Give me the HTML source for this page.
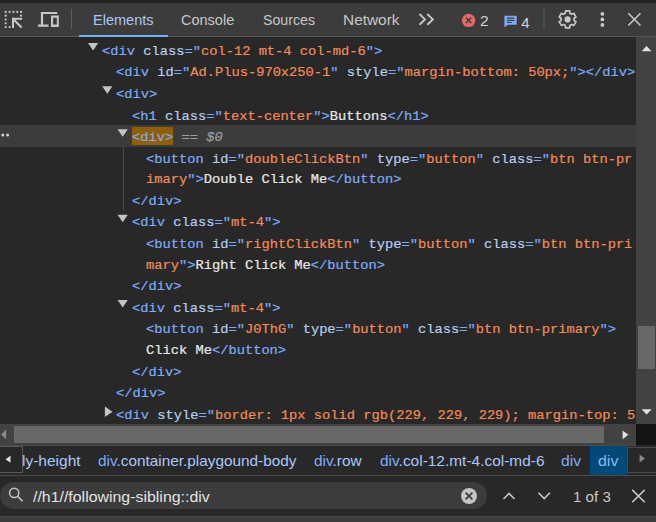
<!DOCTYPE html>
<html><head><meta charset="utf-8">
<style>
*{margin:0;padding:0;box-sizing:border-box}
html,body{width:656px;height:522px;overflow:hidden;background:#282828;position:relative}
body{font-family:"Liberation Sans",sans-serif;color:#e3e3e3}
.a{position:absolute}
#topstrip{left:0;top:0;width:656px;height:3px;background:#1f2326}
#toolbar{left:0;top:3px;width:656px;height:33px;background:#3c3c3c}
#tbline{left:0;top:36px;width:656px;height:1px;background:#575757}
.sep{width:1px;background:#5e5e5e}
.tab{font-size:14.5px;color:#c7c7c7;white-space:pre;line-height:1}
#code{left:0;top:37px;width:636px;height:387px;overflow:hidden}
.ln{position:absolute;-webkit-text-stroke:0.2px currentColor;transform:scaleX(1.0563);transform-origin:0 0;font-family:"Liberation Mono",monospace;font-size:13px;white-space:pre;line-height:1;color:#e8e8e8}
.t{color:#7cacf8}
.n{color:#b5cdee}
.v{color:#f28b54}
.e{color:#7cacf8}
.dim{color:#9aa0a6;font-style:italic}
.ui{position:absolute;white-space:pre;line-height:1;transform-origin:0 0;font-family:"Liberation Sans",sans-serif}
.bd{color:#7cacf8}
.bt{color:#a8c7fa}
.bs{color:#8fb8f4}
.tri{position:absolute;width:0;height:0}
.td{border-left:4.8px solid transparent;border-right:4.8px solid transparent;border-top:7px solid #c4c4c4}
.tr{border-top:4.5px solid transparent;border-bottom:4.5px solid transparent;border-left:7px solid #c4c4c4}
</style></head><body>
<div id="topstrip" class="a"></div>
<div id="toolbar" class="a"></div>
<div id="tbline" class="a"></div>

<!-- toolbar icons -->
<svg class="a" style="left:0;top:0" width="656" height="37" viewBox="0 0 656 37">
  <g fill="#c7c7c7"><circle cx="5.7" cy="11.9" r="1.1"/><circle cx="9.6" cy="11.9" r="1.1"/><circle cx="13.5" cy="11.9" r="1.1"/><circle cx="17.3" cy="11.9" r="1.1"/><circle cx="21.1" cy="11.9" r="1.1"/><circle cx="5.7" cy="15.7" r="1.1"/><circle cx="5.7" cy="19.5" r="1.1"/><circle cx="5.7" cy="23.3" r="1.1"/><circle cx="5.7" cy="27.1" r="1.1"/><circle cx="9.6" cy="27.1" r="1.1"/><circle cx="21.1" cy="15.7" r="1.1"/>
    <rect x="12" y="17.8" width="10.2" height="2"/>
    <rect x="12" y="17.8" width="2" height="10.2"/>
  </g>
  <path d="M13.6 19.4 L21.6 27.4" stroke="#c7c7c7" stroke-width="2.1"/>
  <g fill="#c7c7c7">
    <rect x="40.9" y="12" width="2.2" height="13.5"/>
    <rect x="40.9" y="12" width="16.3" height="2"/>
    <rect x="38.1" y="24.5" width="10.4" height="2.3"/>
    <path d="M51 15.6 h7.8 v11.3 h-7.8 z M53.1 17.7 v6.9 h3.7 v-6.9 z" fill-rule="evenodd"/>
  </g>
  <rect x="71" y="9" width="1" height="20" fill="#5e5e5e"/>
  <rect x="79" y="35" width="89" height="2" fill="#7cacf8"/>
  <g stroke="#c7c7c7" stroke-width="1.9" fill="none">
    <path d="M419.5 14 L425 19.4 L419.5 24.8"/>
    <path d="M427.3 14 L432.8 19.4 L427.3 24.8"/>
  </g>
  <circle cx="468.6" cy="20.4" r="6.7" fill="#e46962"/>
  <path d="M466 17.8 L471.2 23 M471.2 17.8 L466 23" stroke="#3c3c3c" stroke-width="1.4"/>
  <path d="M505 15.8 h11.7 a0.8 0.8 0 0 1 0 0 v8.9 h-9 l-3.3 2.8 v-11.7 z" fill="#7cacf8"/>
  <g stroke="#3c3c3c" stroke-width="1.2"><path d="M507 18.2 h7.3 M507 20.4 h7.3 M507 22.5 h4.8"/></g>
  <rect x="543.5" y="9.5" width="1" height="19" fill="#5e5e5e"/>
  <path d="M565.34 13.20 L565.50 10.96 L569.70 10.96 L569.86 13.20 L571.84 14.34 L573.86 13.36 L575.96 17.00 L574.10 18.25 L574.10 20.55 L575.96 21.80 L573.86 25.44 L571.84 24.46 L569.86 25.60 L569.70 27.84 L565.50 27.84 L565.34 25.60 L563.36 24.46 L561.34 25.44 L559.24 21.80 L561.10 20.55 L561.10 18.25 L559.24 17.00 L561.34 13.36 L563.36 14.34 Z" stroke="#c7c7c7" stroke-width="1.7" fill="none" stroke-linejoin="round"/>
  <circle cx="567.6" cy="19.4" r="3.1" fill="#c7c7c7"/>
  <g fill="#c7c7c7"><circle cx="602.4" cy="13.9" r="1.9"/><circle cx="602.4" cy="19.4" r="1.9"/><circle cx="602.4" cy="25" r="1.9"/></g>
  <path d="M628.3 13.3 L640.5 25.5 M640.5 13.3 L628.3 25.5" stroke="#c7c7c7" stroke-width="1.6"/>
</svg>

<!-- code area -->
<div id="code" class="a">
  <!-- selected row bg -->
  <div class="a" style="left:0;top:88px;width:636px;height:22px;background:#3c3c3c"></div>
  <div class="a" style="left:131.8px;top:89.9px;width:41.2px;height:18.2px;background:#8f5f00"></div>
  <div class="a" style="left:123px;top:110px;width:1px;height:64px;background:#4a4a4a"></div>
<svg class="a" style="left:0;top:0" width="40" height="200"><circle cx="2.8" cy="97.9" r="1.5" fill="#d0d0d0"/><circle cx="7.6" cy="97.9" r="1.5" fill="#d0d0d0"/></svg>
<svg class="a" style="left:0;top:0" width="636" height="387" fill="#c4c4c4"><polygon points="88.00,5.97 98.20,5.97 93.10,13.47"/><polygon points="102.20,49.14 112.40,49.14 107.30,56.64"/><polygon points="117.60,92.31 127.80,92.31 122.70,99.81"/><polygon points="117.60,177.65 127.80,177.65 122.70,185.15"/><polygon points="117.60,262.99 127.80,262.99 122.70,270.49"/><polygon points="104.90,369.51 112.50,374.76 104.90,380.01"/></svg>
<div class="ln" style="left:102.0px;top:7.80px"><span class="t">&lt;div</span> <span class="n">class</span><span class="e">=</span><span class="e">"</span><span class="v">col-12 mt-4 col-md-6</span><span class="e">"</span><span class="t">&gt;</span></div>
<div class="ln" style="left:116.2px;top:29.39px"><span class="t">&lt;div</span> <span class="n">id</span><span class="e">=</span><span class="e">"</span><span class="v">Ad.Plus-970x250-1</span><span class="e">"</span> <span class="n">style</span><span class="e">=</span><span class="e">"</span><span class="v">margin-bottom: 50px;</span><span class="e">"</span><span class="t">&gt;</span><span class="t">&lt;/div</span><span class="t">&gt;</span></div>
<div class="ln" style="left:116.2px;top:50.97px"><span class="t">&lt;div</span><span class="t">&gt;</span></div>
<div class="ln" style="left:131.6px;top:72.56px"><span class="t">&lt;h1</span> <span class="n">class</span><span class="e">=</span><span class="e">"</span><span class="v">text-center</span><span class="e">"</span><span class="t">&gt;</span>Buttons<span class="t">&lt;/h1</span><span class="t">&gt;</span></div>
<div class="ln" style="left:131.6px;top:94.14px"><span class="t">&lt;div</span><span class="t">&gt;</span><span class="dim"> == $0</span></div>
<div class="ln" style="left:146.0px;top:115.73px"><span class="t">&lt;button</span> <span class="n">id</span><span class="e">=</span><span class="e">"</span><span class="v">doubleClickBtn</span><span class="e">"</span> <span class="n">type</span><span class="e">=</span><span class="e">"</span><span class="v">button</span><span class="e">"</span> <span class="n">class</span><span class="e">=</span><span class="e">"</span><span class="v">btn btn-pr</span></div>
<div class="ln" style="left:146.0px;top:136.31px"><span class="v">imary</span><span class="e">"</span><span class="t">&gt;</span>Double Click Me<span class="t">&lt;/button</span><span class="t">&gt;</span></div>
<div class="ln" style="left:131.6px;top:157.90px"><span class="t">&lt;/div</span><span class="t">&gt;</span></div>
<div class="ln" style="left:131.6px;top:179.48px"><span class="t">&lt;div</span> <span class="n">class</span><span class="e">=</span><span class="e">"</span><span class="v">mt-4</span><span class="e">"</span><span class="t">&gt;</span></div>
<div class="ln" style="left:146.0px;top:201.07px"><span class="t">&lt;button</span> <span class="n">id</span><span class="e">=</span><span class="e">"</span><span class="v">rightClickBtn</span><span class="e">"</span> <span class="n">type</span><span class="e">=</span><span class="e">"</span><span class="v">button</span><span class="e">"</span> <span class="n">class</span><span class="e">=</span><span class="e">"</span><span class="v">btn btn-pri</span></div>
<div class="ln" style="left:146.0px;top:221.65px"><span class="v">mary</span><span class="e">"</span><span class="t">&gt;</span>Right Click Me<span class="t">&lt;/button</span><span class="t">&gt;</span></div>
<div class="ln" style="left:131.6px;top:243.24px"><span class="t">&lt;/div</span><span class="t">&gt;</span></div>
<div class="ln" style="left:131.6px;top:264.82px"><span class="t">&lt;div</span> <span class="n">class</span><span class="e">=</span><span class="e">"</span><span class="v">mt-4</span><span class="e">"</span><span class="t">&gt;</span></div>
<div class="ln" style="left:146.0px;top:286.41px"><span class="t">&lt;button</span> <span class="n">id</span><span class="e">=</span><span class="e">"</span><span class="v">J0ThG</span><span class="e">"</span> <span class="n">type</span><span class="e">=</span><span class="e">"</span><span class="v">button</span><span class="e">"</span> <span class="n">class</span><span class="e">=</span><span class="e">"</span><span class="v">btn btn-primary</span><span class="e">"</span><span class="t">&gt;</span></div>
<div class="ln" style="left:146.0px;top:306.99px">Click Me<span class="t">&lt;/button</span><span class="t">&gt;</span></div>
<div class="ln" style="left:131.6px;top:328.57px"><span class="t">&lt;/div</span><span class="t">&gt;</span></div>
<div class="ln" style="left:116.2px;top:350.16px"><span class="t">&lt;/div</span><span class="t">&gt;</span></div>
<div class="ln" style="left:116.2px;top:371.74px"><span class="t">&lt;div</span> <span class="n">style</span><span class="e">=</span><span class="e">"</span><span class="v">border: 1px solid rgb(229, 229, 229); margin-top: 5</span></div>
</div>


<!-- vertical scrollbar -->
<div class="a" style="left:636px;top:37px;width:20px;height:387px;background:#424242"></div>
<div class="a" style="left:638px;top:326px;width:16.5px;height:43px;background:#686868"></div>
<!-- horizontal scrollbar -->
<div class="a" style="left:0;top:424px;width:636px;height:21px;background:#424242"></div>
<div class="a" style="left:14px;top:426.3px;width:589.5px;height:16.4px;background:#686868"></div>
<div class="a" style="left:636px;top:424px;width:20px;height:21px;background:#141414"></div>
<svg class="a" style="left:0;top:0" width="656" height="522" viewBox="0 0 656 522">
  <path d="M641.7 51.3 L651.4 51.3 L646.55 45.9 Z" fill="#e3e3e3"/>
  <path d="M641.6 409.2 L651.7 409.2 L646.65 414.4 Z" fill="#e3e3e3"/>
  <path d="M6.2 429.6 L6.2 439.2 L1 434.4 Z" fill="#8a8a8a"/>
  <path d="M622.6 430.4 L622.6 439.2 L628.3 434.8 Z" fill="#e3e3e3"/>
</svg>
<!-- breadcrumbs -->
<div class="a" style="left:0;top:445px;width:656px;height:30px;background:#282828"></div>
<div class="a" style="left:0;top:444.5px;width:636px;height:1px;background:#4a4a4a"></div>
<div class="a" style="left:0;top:475px;width:656px;height:1px;background:#4a4a4a"></div>
<div class="a" style="left:-1px;top:446px;width:24px;height:27.3px;border:1px solid #5a5a5a;background:#282828"></div>
<div class="a" style="left:590px;top:446px;width:36.8px;height:29px;background:#004a77"></div>
<div class="a" style="left:627px;top:446.7px;width:31px;height:26.3px;border:1px solid #4a4a4a;background:#282828"></div>
<svg class="a" style="left:0;top:0" width="656" height="522" viewBox="0 0 656 522">
  <path d="M10.5 455.8 L10.5 462.8 L5.5 459.3 Z" fill="#e3e3e3"/>
  <path d="M639.6 454.5 L639.6 462.5 L645 458.5 Z" fill="#8a8a8a"/>
</svg>
<!-- search bar -->
<div class="a" style="left:0;top:476px;width:656px;height:40px;background:#282828"></div>
<div class="a" style="left:0;top:516px;width:656px;height:1px;background:#4a4a4a"></div>
<div class="a" style="left:0;top:517px;width:656px;height:5px;background:#3c3c3c"></div>
<div class="a" style="left:0;top:482px;width:487px;height:27px;border-radius:13.5px;background:#3c3c3c"></div>
<svg class="a" style="left:0;top:0" width="656" height="522" viewBox="0 0 656 522">
  <circle cx="14.2" cy="492.9" r="4.6" stroke="#c7c7c7" stroke-width="1.5" fill="none"/>
  <path d="M17.6 496.3 L22.6 501.3" stroke="#c7c7c7" stroke-width="1.6"/>
  <circle cx="469" cy="496" r="8" fill="#c4c4c4"/>
  <path d="M465.6 492.6 L472.4 499.4 M472.4 492.6 L465.6 499.4" stroke="#3c3c3c" stroke-width="1.7"/>
  <path d="M503.5 499 L509 493.5 L514.5 499" stroke="#c7c7c7" stroke-width="1.6" fill="none"/>
  <path d="M538.5 492.8 L544.2 498.5 L549.9 492.8" stroke="#c7c7c7" stroke-width="1.6" fill="none"/>
  <path d="M632.2 489.9 L644.7 502.2 M644.7 489.9 L632.2 502.2" stroke="#c7c7c7" stroke-width="1.6"/>
</svg>
<div class="ui" style="left:92.73px;top:12.10px;font-size:15px;transform:scaleX(0.9689);color:#a8c7fa">Elements</div>
<div class="ui" style="left:181.03px;top:12.10px;font-size:15px;transform:scaleX(0.9667);color:#c7c7c7">Console</div>
<div class="ui" style="left:262.56px;top:12.10px;font-size:15px;transform:scaleX(0.9444);color:#c7c7c7">Sources</div>
<div class="ui" style="left:342.97px;top:12.10px;font-size:15px;transform:scaleX(1.0278);color:#c7c7c7">Network</div>
<div class="ui" style="left:479.96px;top:12.90px;font-size:15px;transform:scaleX(1.0429);color:#d4d4d4">2</div>
<div class="ui" style="left:521.20px;top:15.10px;font-size:15px;transform:scaleX(1.0000);color:#d4d4d4">4</div>
<div class="ui" style="left:21.67px;top:452.60px;font-size:15px;transform:scaleX(1.0339)"><span class="bt">ly-height</span></div>
<div class="ui" style="left:98.08px;top:452.60px;font-size:15px;transform:scaleX(1.0228)"><span class="bd">div</span><span class="bt">.container.playgound-body</span></div>
<div class="ui" style="left:313.77px;top:452.60px;font-size:15px;transform:scaleX(1.0283)"><span class="bd">div</span><span class="bt">.row</span></div>
<div class="ui" style="left:379.77px;top:452.60px;font-size:15px;transform:scaleX(1.0297)"><span class="bd">div</span><span class="bt">.col-12.mt-4.col-md-6</span></div>
<div class="ui" style="left:561.06px;top:452.60px;font-size:15px;transform:scaleX(1.0444)"><span class="bd">div</span></div>
<div class="ui" style="left:598.04px;top:452.60px;font-size:15px;transform:scaleX(1.0611)"><span class="bs">div</span></div>
<div class="ui" style="left:33.00px;top:489.10px;font-size:15px;transform:scaleX(1.0599);color:#e3e3e3">//h1//following-sibling::div</div>
<div class="ui" style="left:572.99px;top:488.70px;font-size:15px;transform:scaleX(1.0083);color:#c7c7c7">1 of 3</div>
</body></html>
